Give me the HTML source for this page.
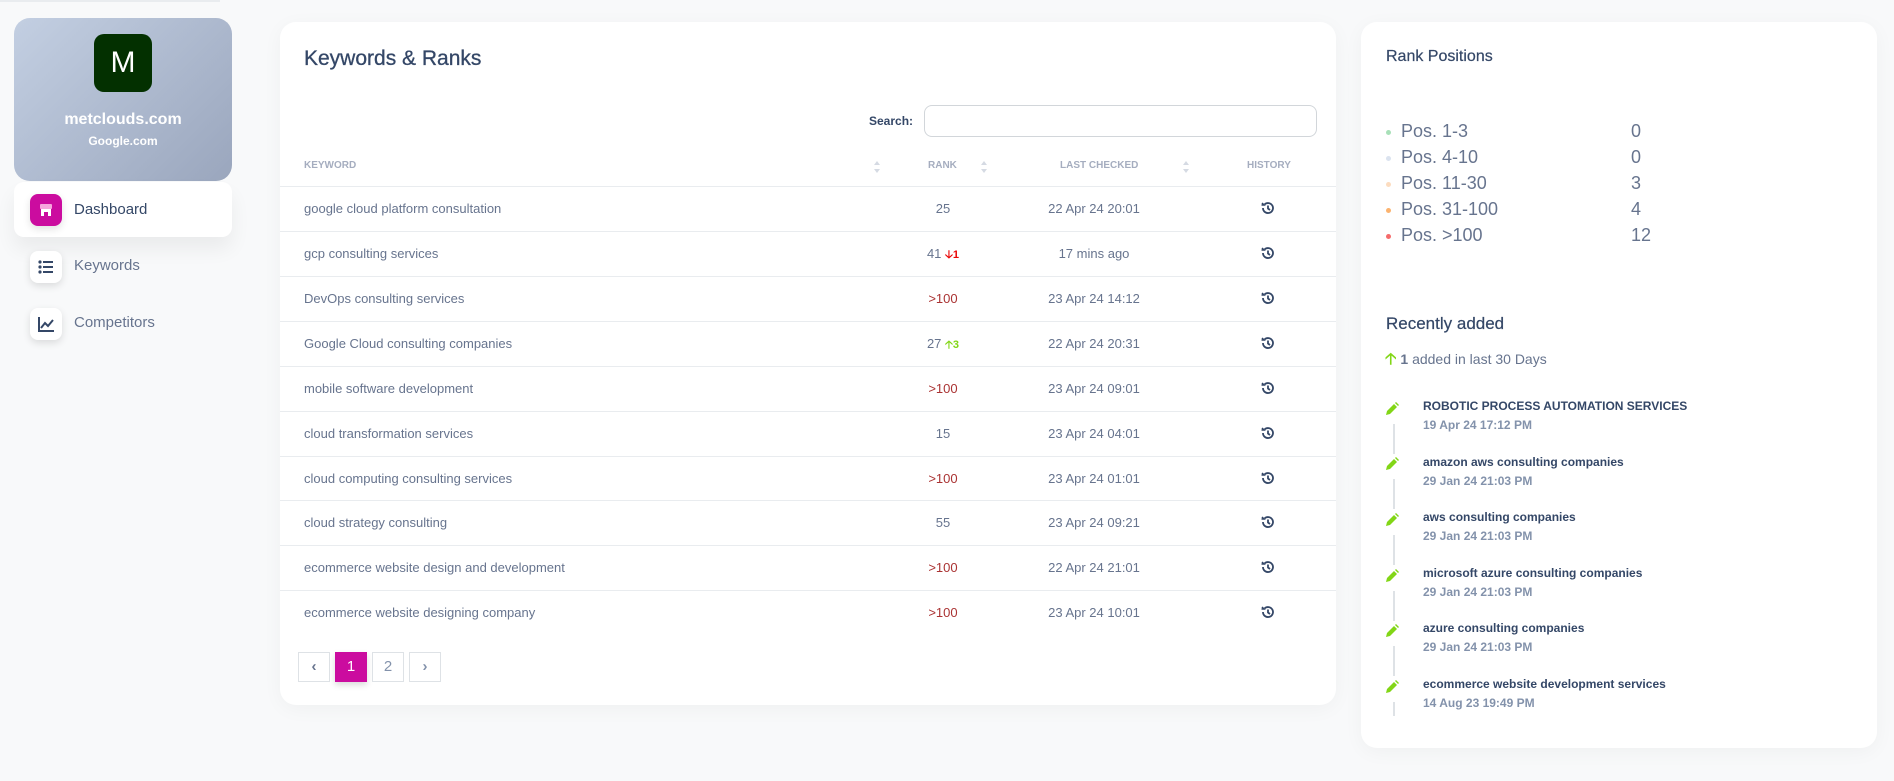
<!DOCTYPE html>
<html><head><meta charset="utf-8"><style>
*{box-sizing:border-box;margin:0;padding:0}
body{width:1894px;height:781px;background:#f8f9fa;font-family:"Liberation Sans",sans-serif;color:#67748e;position:relative;overflow:hidden}
.abs{position:absolute}
.lcard{left:14px;top:18px;width:218px;height:163px;border-radius:16px;background:linear-gradient(135deg,#c3cfe2 0%,#9aa6bd 100%)}
.av{left:94px;top:34px;width:58px;height:58px;border-radius:10px;background:#033000;color:#fff;font-size:30px;text-align:center;line-height:58px}
.nav{left:14px;width:218px;height:55px;border-radius:10px}
.ic{position:absolute;left:16px;top:12px;width:32px;height:32px;border-radius:8px;background:#fff;box-shadow:0 3px 8px rgba(0,0,0,.12)}
.nav span{position:absolute;left:60px;top:18px;font-size:15px}
.card{background:#fff;border-radius:16px;box-shadow:0 4px 20px rgba(0,0,0,.04)}
.row{position:absolute;left:280px;width:1056px;height:45px;border-top:1px solid #e9ecef;font-size:13px;color:#67748e}
.row div{position:absolute;top:0;line-height:44px}
.k{left:24px}.r{left:613px;width:100px;text-align:center}.d{left:734px;width:160px;text-align:center}
.hdr{position:absolute;top:160px;font-size:10px;color:#a5adbf;font-weight:bold}
.sort{position:absolute;top:160px;width:8px;height:14px}
.pg{position:absolute;top:652px;width:32px;height:30px;border:1px solid #dee2e6;text-align:center;line-height:28px;font-size:15px;color:#8392ab}
.pos{position:absolute;left:1401px;font-size:18px;color:#67748e}
.dot{position:absolute;left:1386px;width:5px;height:5px;border-radius:50%}
.val{position:absolute;left:1631px;font-size:18px;color:#67748e}
.it{position:absolute;left:1423px;font-size:12px;font-weight:bold;color:#344767}
.dt{position:absolute;left:1423px;font-size:12px;color:#8392ab;font-weight:bold}
.vl{position:absolute;left:1393px;width:2px;height:30px;background:#dee2e6}
</style></head><body>
<div class="abs" style="left:0;top:0;width:220px;height:2px;background:#e9ecef"></div>
<div class="abs lcard"></div>
<div class="abs av">M</div>
<div class="abs" style="left:14px;top:111px;width:218px;text-align:center;color:#fff;font-size:16px;font-weight:bold">metclouds.com</div>
<div class="abs" style="left:14px;top:134px;width:218px;text-align:center;color:#fff;font-size:12px;font-weight:bold">Google.com</div>

<div class="abs nav" style="top:182px;background:#fff;box-shadow:0 12px 20px rgba(0,0,0,.06)">
<div class="ic" style="background:#cb0c9f"><svg width="32" height="32"><rect x="10" y="10" width="12" height="5" rx="1" fill="#f6a6dd"/><rect x="11" y="15" width="10" height="7" fill="#fff"/><rect x="14" y="18" width="4" height="4" fill="#cb0c9f"/></svg></div>
<span style="color:#344767;top:19px">Dashboard</span></div>
<div class="abs nav" style="top:239px">
<div class="ic"><svg width="32" height="32" fill="#344767"><circle cx="10" cy="11" r="1.6"/><circle cx="10" cy="16" r="1.6"/><circle cx="10" cy="21" r="1.6"/><rect x="13" y="10" width="10" height="2"/><rect x="13" y="15" width="10" height="2"/><rect x="13" y="20" width="10" height="2"/></svg></div>
<span>Keywords</span></div>
<div class="abs nav" style="top:296px">
<div class="ic"><svg width="32" height="32" fill="none" stroke="#344767" stroke-width="2"><path d="M9 9V23H24"/><path d="M11 20L15 15L18 18L23 12"/></svg></div>
<span>Competitors</span></div>

<div class="abs card" style="left:280px;top:22px;width:1056px;height:683px"></div>
<div class="abs" style="left:304px;top:47px;font-size:21px;color:#344767;-webkit-text-stroke:0.3px #344767">Keywords &amp; Ranks</div>
<div class="abs" style="left:869px;top:114px;font-size:12px;font-weight:bold;color:#344767">Search:</div>
<div class="abs" style="left:924px;top:105px;width:393px;height:32px;border:1px solid #d2d6da;border-radius:8px;background:#fff"></div>

<div class="hdr" style="left:304px">KEYWORD</div>
<div class="hdr" style="left:928px">RANK</div>
<div class="hdr" style="left:1060px">LAST CHECKED</div>
<div class="hdr" style="left:1247px">HISTORY</div>
<svg class="sort" style="left:873px" viewBox="0 0 8 14" fill="#d5dae3"><path d="M4 1L7 5H1Z"/><path d="M4 13L7 9H1Z"/></svg>
<svg class="sort" style="left:980px" viewBox="0 0 8 14" fill="#d5dae3"><path d="M4 1L7 5H1Z"/><path d="M4 13L7 9H1Z"/></svg>
<svg class="sort" style="left:1182px" viewBox="0 0 8 14" fill="#d5dae3"><path d="M4 1L7 5H1Z"/><path d="M4 13L7 9H1Z"/></svg>

<div class="row" style="top:186px"><div class="k">google cloud platform consultation</div><div class="r">25</div><div class="d">22 Apr 24 20:01</div></div>
<div class="row" style="top:231px"><div class="k">gcp consulting services</div><div class="r">41 <b style="color:#ea0606;font-size:11px">🡣1</b></div><div class="d">17 mins ago</div></div>
<div class="row" style="top:276px"><div class="k">DevOps consulting services</div><div class="r" style="color:#a33">&gt;100</div><div class="d">23 Apr 24 14:12</div></div>
<div class="row" style="top:321px"><div class="k">Google Cloud consulting companies</div><div class="r">27 <b style="color:#82d616;font-size:11px">🡡3</b></div><div class="d">22 Apr 24 20:31</div></div>
<div class="row" style="top:366px"><div class="k">mobile software development</div><div class="r" style="color:#a33">&gt;100</div><div class="d">23 Apr 24 09:01</div></div>
<div class="row" style="top:411px"><div class="k">cloud transformation services</div><div class="r">15</div><div class="d">23 Apr 24 04:01</div></div>
<div class="row" style="top:456px"><div class="k">cloud computing consulting services</div><div class="r" style="color:#a33">&gt;100</div><div class="d">23 Apr 24 01:01</div></div>
<div class="row" style="top:500px"><div class="k">cloud strategy consulting</div><div class="r">55</div><div class="d">23 Apr 24 09:21</div></div>
<div class="row" style="top:545px"><div class="k">ecommerce website design and development</div><div class="r" style="color:#a33">&gt;100</div><div class="d">22 Apr 24 21:01</div></div>
<div class="row" style="top:590px"><div class="k">ecommerce website designing company</div><div class="r" style="color:#a33">&gt;100</div><div class="d">23 Apr 24 10:01</div></div>

<svg class="abs" style="left:0;top:0" width="1894" height="781">
<defs><g id="hi" fill="none" stroke="#344767" stroke-width="1.8"><path d="M-3.5 -3.5A5 5 0 1 1 -5 0"/><path d="M-6 -5L-4 -3H-6.5" stroke-width="1.5"/><path d="M0 -2.5V0.5L2 2"/></g></defs>
<use href="#hi" x="1268" y="208"/><use href="#hi" x="1268" y="253"/><use href="#hi" x="1268" y="298"/><use href="#hi" x="1268" y="343"/><use href="#hi" x="1268" y="388"/><use href="#hi" x="1268" y="433"/><use href="#hi" x="1268" y="478"/><use href="#hi" x="1268" y="522"/><use href="#hi" x="1268" y="567"/><use href="#hi" x="1268" y="612"/>
</svg>

<div class="pg" style="left:298px;font-weight:bold;color:#67748e">‹</div>
<div class="pg" style="left:335px;background:#cb0c9f;border-color:#cb0c9f;color:#fff;box-shadow:0 3px 6px rgba(0,0,0,.15)">1</div>
<div class="pg" style="left:372px">2</div>
<div class="pg" style="left:409px;font-weight:bold">›</div>

<div class="abs card" style="left:1361px;top:22px;width:516px;height:726px"></div>
<div class="abs" style="left:1386px;top:48px;font-size:16px;color:#344767;-webkit-text-stroke:0.2px #344767">Rank Positions</div>
<div class="dot" style="top:130px;background:#a8e0b8"></div><div class="pos" style="top:121px">Pos. 1-3</div><div class="val" style="top:121px">0</div>
<div class="dot" style="top:156px;background:#dbe3ef"></div><div class="pos" style="top:147px">Pos. 4-10</div><div class="val" style="top:147px">0</div>
<div class="dot" style="top:182px;background:#fcdcbf"></div><div class="pos" style="top:173px">Pos. 11-30</div><div class="val" style="top:173px">3</div>
<div class="dot" style="top:208px;background:#fbb36f"></div><div class="pos" style="top:199px">Pos. 31-100</div><div class="val" style="top:199px">4</div>
<div class="dot" style="top:234px;background:#f56b6b"></div><div class="pos" style="top:225px">Pos. &gt;100</div><div class="val" style="top:225px">12</div>

<div class="abs" style="left:1386px;top:314px;font-size:17px;color:#344767;-webkit-text-stroke:0.2px #344767">Recently added</div>
<div class="abs" style="left:1385px;top:348px;font-size:14px"><b style="color:#82d616;font-size:16px">🡡</b> <b style="color:#67748e">1</b> added in last 30 Days</div>

<svg class="abs" style="left:0;top:0" width="1894" height="781">
<defs><g id="pn" fill="#82d616"><path d="M0 10L1 6L8 -1L11 2L4 9Z"/><path d="M9 -2L10 -3L13 0L12 1Z"/></g></defs>
<use href="#pn" x="1386" y="405"/><use href="#pn" x="1386" y="460"/><use href="#pn" x="1386" y="516"/><use href="#pn" x="1386" y="572"/><use href="#pn" x="1386" y="627"/><use href="#pn" x="1386" y="683"/>
</svg>
<div class="vl" style="top:424px"></div><div class="vl" style="top:479px"></div><div class="vl" style="top:535px"></div><div class="vl" style="top:591px"></div><div class="vl" style="top:646px"></div><div class="vl" style="top:702px;height:14px"></div>

<div class="it" style="top:399px">ROBOTIC PROCESS AUTOMATION SERVICES</div><div class="dt" style="top:418px">19 Apr 24 17:12 PM</div>
<div class="it" style="top:455px">amazon aws consulting companies</div><div class="dt" style="top:474px">29 Jan 24 21:03 PM</div>
<div class="it" style="top:510px">aws consulting companies</div><div class="dt" style="top:529px">29 Jan 24 21:03 PM</div>
<div class="it" style="top:566px">microsoft azure consulting companies</div><div class="dt" style="top:585px">29 Jan 24 21:03 PM</div>
<div class="it" style="top:621px">azure consulting companies</div><div class="dt" style="top:640px">29 Jan 24 21:03 PM</div>
<div class="it" style="top:677px">ecommerce website development services</div><div class="dt" style="top:696px">14 Aug 23 19:49 PM</div>
</body></html>
